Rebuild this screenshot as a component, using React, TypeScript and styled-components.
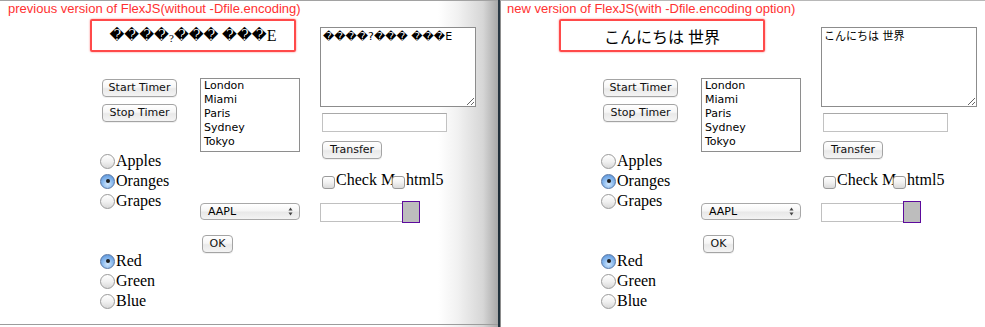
import React from 'react';
import styled, { createGlobalStyle } from 'styled-components';

const GlobalStyle = createGlobalStyle`
  html, body {
    margin: 0;
    padding: 0;
    background: #fff;
  }
  body {
    width: 985px;
    height: 327px;
    overflow: hidden;
    font-family: 'DejaVu Sans', 'Noto Sans CJK JP', sans-serif;
  }
`;

const SANS = `'DejaVu Sans', 'Noto Sans CJK JP', sans-serif`;
const SERIF = `'Liberation Serif', 'DejaVu Serif', 'Noto Sans CJK JP', serif`;

const Stage = styled.div`
  display: flex;
  width: 985px;
  height: 327px;
  overflow: hidden;
`;

const Window = styled.div<{ $side: 'left' | 'right' }>`
  flex: none;
  box-sizing: border-box;
  height: 327px;
  width: ${(p) => (p.$side === 'left' ? '498px' : '485px')};
  border-top: 1px solid ${(p) => (p.$side === 'left' ? '#a2a2a2' : '#b8b8b8')};
  border-left: ${(p) => (p.$side === 'left' ? 'none' : '1px solid #8d8d8d')};
  background: ${(p) => (p.$side === 'left'
    ? 'linear-gradient(to right, #ffffff 0%, #ffffff 88%, #f1f1f1 92%, #d6d6d6 97%, #a8a8a8 100%)'
    : '#ffffff')};
`;

const Screen = styled.div<{ $side: 'left' | 'right' }>`
  box-sizing: border-box;
  height: ${(p) => (p.$side === 'left' ? '324px' : '326px')};
  border-bottom: ${(p) => (p.$side === 'left' ? '1px solid #9c9c9c' : 'none')};
`;

const Divider = styled.div`
  flex: none;
  width: 2px;
  height: 327px;
  background: linear-gradient(to bottom, #2b3a46, #1d2b36 60%, #22343f);
`;

const Title = styled.div<{ $left: number }>`
  height: 16px;
  padding-left: ${(p) => p.$left}px;
  font-family: 'Liberation Sans', sans-serif;
  font-size: 13px;
  line-height: 16px;
  color: #ff3131;
  white-space: nowrap;
`;

const Body = styled.div`
  display: flex;
`;

const LeftArea = styled.div`
  flex: none;
  width: 320px;
`;

const Greeting = styled.div<{ $left: number }>`
  box-sizing: border-box;
  width: 206px;
  height: 33px;
  margin: 2px 0 0 ${(p) => p.$left}px;
  border: 2px solid #ff4a4a;
  border-radius: 2px;
  box-shadow: 0 0 2px rgba(255, 60, 60, 0.7);
  display: flex;
  align-items: center;
  justify-content: center;
  font-family: ${SERIF};
  font-size: 16px;
  color: #000;
  white-space: nowrap;
`;

const Garbled = styled.span`
  font-size: 14.5px;
`;

const SmallMark = styled.span`
  font-size: 11px;
  position: relative;
  top: 2px;
`;

const Columns = styled.div`
  display: flex;
  padding-left: 100px;
`;

const ColOne = styled.div`
  flex: none;
  width: 100px;
  padding-top: 27px;
  display: flex;
  flex-direction: column;
  align-items: flex-start;
`;

const ColTwo = styled.div`
  flex: none;
  width: 120px;
  padding-top: 26px;
  display: flex;
  flex-direction: column;
  align-items: flex-start;
`;

const AquaButton = styled.div<{ $w: number; $mt?: number; $ml?: number }>`
  box-sizing: border-box;
  width: ${(p) => p.$w}px;
  height: 18px;
  margin-top: ${(p) => p.$mt ?? 0}px;
  margin-left: ${(p) => p.$ml ?? 0}px;
  border: 1px solid #a4a4a4;
  border-radius: 4px;
  background: linear-gradient(to bottom, #ffffff 0%, #f6f6f6 45%, #e9e9e9 55%, #f4f4f4 100%);
  box-shadow: 0 1px 0 rgba(0, 0, 0, 0.06);
  font-family: ${SANS};
  font-size: 11px;
  line-height: 16px;
  text-align: center;
  color: #111;
  white-space: nowrap;
`;

const RadioGroup = styled.div<{ $mt: number }>`
  margin-top: ${(p) => p.$mt}px;
  display: flex;
  flex-direction: column;
`;

const RadioRow = styled.div`
  height: 20px;
  display: flex;
  align-items: center;
  font-family: ${SERIF};
  font-size: 16px;
  color: #000;
`;

const RadioDot = styled.span<{ $on?: boolean }>`
  box-sizing: border-box;
  flex: none;
  width: 15px;
  height: 15px;
  margin-right: 1px;
  border-radius: 50%;
  border: 1px solid ${(p) => (p.$on ? '#5a77a3' : '#9a9a9a')};
  background: ${(p) => (p.$on
    ? 'radial-gradient(circle at 50% 70%, #d3e7fb 0%, #8dbcef 45%, #4d8ad6 100%)'
    : 'linear-gradient(to bottom, #ffffff 0%, #f1f1f1 50%, #d9d9d9 100%)')};
  display: flex;
  align-items: center;
  justify-content: center;
  &::after {
    content: '';
    display: ${(p) => (p.$on ? 'block' : 'none')};
    width: 4px;
    height: 4px;
    border-radius: 50%;
    background: #1c1c1c;
  }
`;

const ListBox = styled.div`
  box-sizing: border-box;
  width: 100px;
  height: 74px;
  border: 1px solid #8e8e8e;
  padding: 0 3px;
  font-family: ${SANS};
  font-size: 11px;
  line-height: 14px;
  color: #000;
`;

const PopUp = styled.div`
  box-sizing: border-box;
  width: 100px;
  height: 17px;
  margin-top: 51px;
  border: 1px solid #a8a8a8;
  border-radius: 4px;
  background: linear-gradient(to bottom, #ffffff 0%, #f5f5f5 45%, #e8e8e8 55%, #f3f3f3 100%);
  display: flex;
  align-items: center;
  justify-content: space-between;
  padding: 0 6px 0 7px;
  font-family: ${SANS};
  font-size: 11px;
  color: #000;
`;

const RightCol = styled.div`
  flex: none;
  padding-top: 10px;
  display: flex;
  flex-direction: column;
  align-items: flex-start;
`;

const TextArea = styled.textarea`
  box-sizing: border-box;
  width: 156px;
  height: 80px;
  margin: 0;
  border: 1px solid #8c8c8c;
  padding: 2px 2px;
  font-family: ${SANS};
  font-size: 11px;
  line-height: 14px;
  color: #000;
  background: #fff;
  outline: none;
`;

const TextInput = styled.div`
  box-sizing: border-box;
  width: 125px;
  height: 19px;
  margin: 6px 0 0 2px;
  border: 1px solid #c2c2c2;
  border-top-color: #a9a9a9;
  background: #fff;
`;

const CheckRow = styled.div`
  height: 20px;
  margin: 11px 0 0 2px;
  display: flex;
  align-items: center;
  font-family: ${SERIF};
  font-size: 16px;
  color: #000;
  white-space: nowrap;
`;

const CheckBox = styled.span<{ $ml?: number }>`
  box-sizing: border-box;
  flex: none;
  width: 13px;
  height: 13px;
  margin: 4px 1px 0 ${(p) => p.$ml ?? 0}px;
  border: 1px solid #9a9a9a;
  border-radius: 3px;
  background: linear-gradient(to bottom, #ffffff 0%, #f1f1f1 50%, #dadada 100%);
`;

const SliderRow = styled.div`
  margin-top: 11px;
  display: flex;
  align-items: center;
`;

const Track = styled.div`
  box-sizing: border-box;
  width: 83px;
  height: 19px;
  border: 1px solid #c0c0c0;
  background: #fff;
`;

const Thumb = styled.div`
  box-sizing: border-box;
  width: 18px;
  height: 22px;
  margin-left: -1px;
  border: 1.5px solid #5c0a9c;
  background: #bdbdbd;
`;

function Arrows() {
  return (
    <svg width="5" height="9" viewBox="0 0 5 9">
      <path d="M2.5 0.5 L4.5 3.5 L0.5 3.5 Z" fill="#444" />
      <path d="M2.5 8.5 L4.5 5.5 L0.5 5.5 Z" fill="#444" />
    </svg>
  );
}

interface PanelProps {
  side: 'left' | 'right';
  title: string;
  titleLeft: number;
  greetingLeft: number;
  greeting: React.ReactNode;
  note: string;
}

function Panel({
  side, title, titleLeft, greetingLeft, greeting, note,
}: PanelProps) {
  return (
    <Window $side={side}>
      <Screen $side={side}>
        <Title $left={titleLeft}>{title}</Title>
        <Body>
          <LeftArea>
            <Greeting $left={greetingLeft}>{greeting}</Greeting>
            <Columns>
              <ColOne>
                <AquaButton $w={75} $ml={2}>Start Timer</AquaButton>
                <AquaButton $w={75} $ml={2} $mt={7}>Stop Timer</AquaButton>
                <RadioGroup $mt={29}>
                  <RadioRow><RadioDot />Apples</RadioRow>
                  <RadioRow><RadioDot $on />Oranges</RadioRow>
                  <RadioRow><RadioDot />Grapes</RadioRow>
                </RadioGroup>
                <RadioGroup $mt={40}>
                  <RadioRow><RadioDot $on />Red</RadioRow>
                  <RadioRow><RadioDot />Green</RadioRow>
                  <RadioRow><RadioDot />Blue</RadioRow>
                </RadioGroup>
              </ColOne>
              <ColTwo>
                <ListBox>
                  {['London', 'Miami', 'Paris', 'Sydney', 'Tokyo'].map((city) => (
                    <div key={city}>{city}</div>
                  ))}
                </ListBox>
                <PopUp>
                  <span>AAPL</span>
                  <Arrows />
                </PopUp>
                <AquaButton $w={31} $ml={2} $mt={15}>OK</AquaButton>
              </ColTwo>
            </Columns>
          </LeftArea>
          <RightCol>
            <TextArea defaultValue={note} readOnly />
            <TextInput />
            <AquaButton $w={60} $ml={2} $mt={9}>Transfer</AquaButton>
            <CheckRow>
              <CheckBox />
              Check M
              <CheckBox $ml={-3} />
              html5
            </CheckRow>
            <SliderRow>
              <Track />
              <Thumb />
            </SliderRow>
          </RightCol>
        </Body>
      </Screen>
    </Window>
  );
}

const BROKEN = '\uFFFD\uFFFD\uFFFD\uFFFD?\uFFFD\uFFFD\uFFFD \uFFFD\uFFFD\uFFFDE';

export default function App() {
  return (
    <>
      <GlobalStyle />
      <Stage>
        <Panel
          side="left"
          title="previous version of FlexJS(without -Dfile.encoding)"
          titleLeft={8}
          greetingLeft={90}
          greeting={(
            <>
              <Garbled>{'\uFFFD\uFFFD\uFFFD\uFFFD'}</Garbled>
              <SmallMark>?</SmallMark>
              <Garbled>{'\uFFFD\uFFFD\uFFFD \uFFFD\uFFFD\uFFFD'}</Garbled>
              E
            </>
          )}
          note={BROKEN}
        />
        <Divider />
        <Panel
          side="right"
          title="new version of FlexJS(with -Dfile.encoding option)"
          titleLeft={6}
          greetingLeft={58}
          greeting="こんにちは 世界"
          note="こんにちは 世界"
        />
      </Stage>
    </>
  );
}
